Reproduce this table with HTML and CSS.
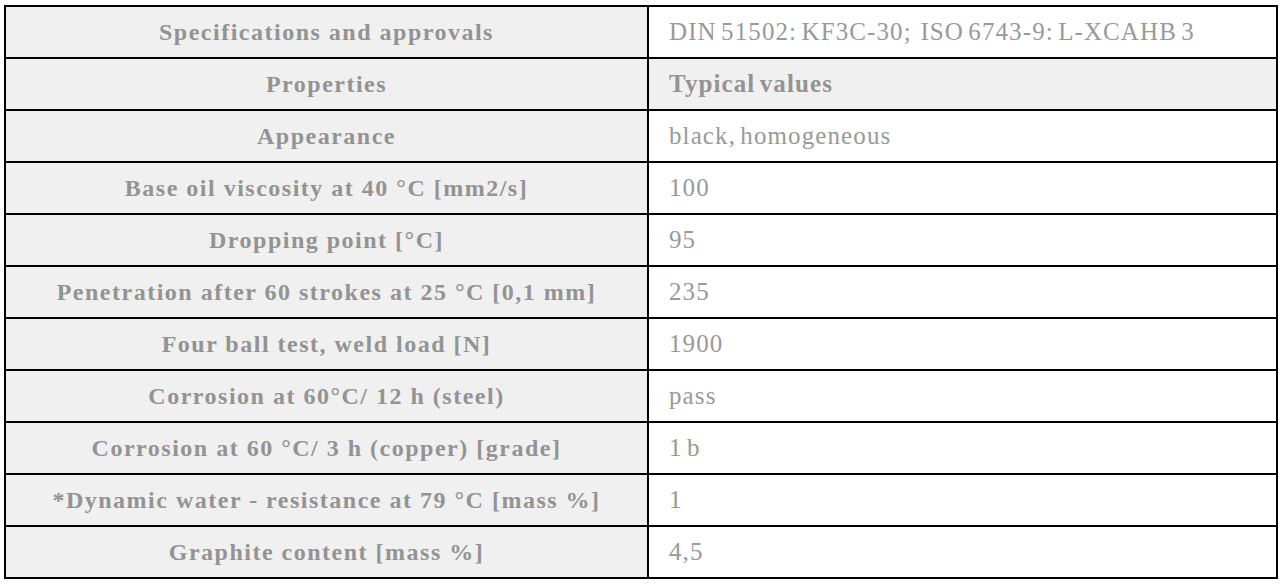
FILE: index.html
```html
<!DOCTYPE html>
<html>
  <head>
    <title>Product data</title>
    <link rel="stylesheet" href="styles.css">
  </head>
  <body>
    <table class="specs">
      <tr>
        <th>Specifications and approvals</th>
        <td>DIN 51502: KF3C-30;&nbsp; ISO 6743-9: L-XCAHB 3</td>
      </tr>
      <tr class="head">
        <th>Properties</th>
        <td>Typical values</td>
      </tr>
      <tr>
        <th>Appearance</th>
        <td>black, homogeneous</td>
      </tr>
      <tr>
        <th>Base oil viscosity at 40 °C [mm2/s]</th>
        <td>100</td>
      </tr>
      <tr>
        <th>Dropping point [°C]</th>
        <td>95</td>
      </tr>
      <tr>
        <th>Penetration after 60 strokes at 25 °C [0,1 mm]</th>
        <td>235</td>
      </tr>
      <tr>
        <th>Four ball test, weld load [N]</th>
        <td>1900</td>
      </tr>
      <tr>
        <th>Corrosion at 60°C/ 12 h (steel)</th>
        <td>pass</td>
      </tr>
      <tr>
        <th>Corrosion at 60 °C/ 3 h (copper) [grade]</th>
        <td>1 b</td>
      </tr>
      <tr>
        <th>*Dynamic water - resistance at 79 °C [mass %]</th>
        <td>1</td>
      </tr>
      <tr>
        <th>Graphite content [mass %]</th>
        <td>4,5</td>
      </tr>
    </table>
  </body>
</html>
```

FILE: styles.css
```css
body {
  margin: 0;
  padding: 5px 0 0 4px;
  background-color: #fff;
  font-family: "Liberation Serif", "Times New Roman", serif;
}

.specs {
  width: 1274px;
  border-spacing: 0;
  border-top: 2px solid #000;
  border-left: 2px solid #000;
  table-layout: fixed;
}

.specs th,
.specs td {
  height: 50px;
  padding: 0;
  border-right: 2px solid #000;
  border-bottom: 2px solid #000;
  color: #939393;
  vertical-align: middle;
}

.specs th {
  width: 641px;
  background-color: #f0f0f0;
  text-align: center;
  font-size: 24px;
  font-weight: bold;
  letter-spacing: 1.5px;
}

.specs td {
  padding-left: 20px;
  text-align: left;
  font-size: 25px;
  font-weight: normal;
  letter-spacing: 1.1px;
  word-spacing: -3px;
  color: #999;
}

.specs .head td {
  background-color: #f0f0f0;
  font-weight: bold;
  color: #939393;
}
```
